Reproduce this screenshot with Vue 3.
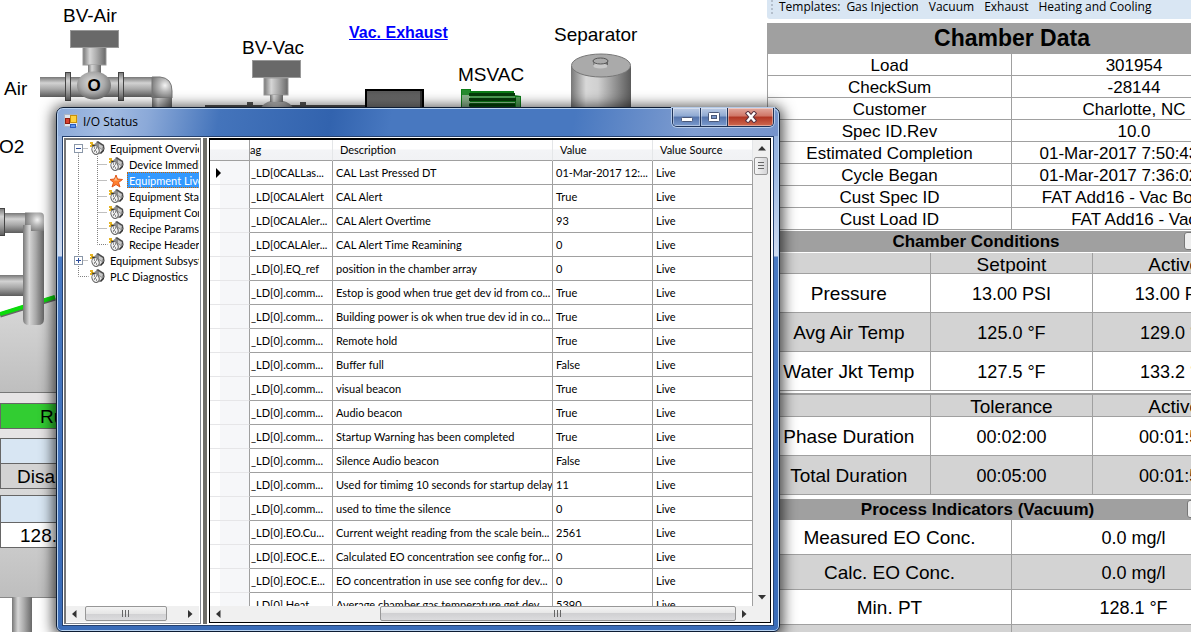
<template>
  <div class="hmi">
    <main class="diagram">
      <svg class="plant" width="767" height="632" viewBox="0 0 767 632">
        <defs>
          <linearGradient id="pipeH" x1="0" y1="0" x2="0" y2="1">
            <stop offset="0" stop-color="#777" />
            <stop offset="0.3" stop-color="#d2d2d2" />
            <stop offset="0.6" stop-color="#a8a8a8" />
            <stop offset="1" stop-color="#5c5c5c" />
          </linearGradient>
          <linearGradient id="pipeV" x1="0" y1="0" x2="1" y2="0">
            <stop offset="0" stop-color="#777" />
            <stop offset="0.3" stop-color="#d6d6d6" />
            <stop offset="0.6" stop-color="#aaa" />
            <stop offset="1" stop-color="#686868" />
          </linearGradient>
          <linearGradient id="tank" x1="0" y1="0" x2="1" y2="0">
            <stop offset="0" stop-color="#777" />
            <stop offset="0.25" stop-color="#d8d8d8" />
            <stop offset="0.45" stop-color="#d0d0d0" />
            <stop offset="1" stop-color="#5a5a5a" />
          </linearGradient>
          <linearGradient id="vessel" x1="0" y1="0" x2="0" y2="1">
            <stop offset="0" stop-color="#d9d9d9" />
            <stop offset="1" stop-color="#bebebe" />
          </linearGradient>
          <linearGradient id="box" x1="0" y1="0" x2="0" y2="1">
            <stop offset="0" stop-color="#555" />
            <stop offset="1" stop-color="#838383" />
          </linearGradient>
          <radialGradient id="ball" cx="0.45" cy="0.4" r="0.6">
            <stop offset="0" stop-color="#dcdcdc" />
            <stop offset="0.6" stop-color="#aaa" />
            <stop offset="1" stop-color="#707070" />
          </radialGradient>
          <radialGradient id="elbow" cx="0.65" cy="0.4" r="0.7">
            <stop offset="0" stop-color="#f4f4f4" />
            <stop offset="0.4" stop-color="#bbb" />
            <stop offset="1" stop-color="#777" />
          </radialGradient>
        </defs>

        <!-- air inlet valve -->
        <rect x="40" y="77" width="113" height="20" fill="url(#pipeH)" />
        <path d="M152 77h8q12 1 12 14v7h-20z" fill="url(#elbow)" stroke="#777" />
        <rect x="152" y="98" width="20" height="12" fill="url(#pipeV)" />
        <rect x="65.500" y="72.500" width="5" height="28" fill="url(#pipeH)" stroke="#444" />
        <rect x="118.500" y="72.500" width="5" height="28" fill="url(#pipeH)" stroke="#444" />
        <rect x="83" y="47" width="23" height="18" fill="url(#pipeV)" stroke="#999" />
        <rect x="88" y="65" width="13" height="10" fill="url(#pipeV)" />
        <ellipse cx="94" cy="85.500" rx="17" ry="14" fill="url(#ball)" />
        <rect x="70.500" y="30.500" width="48" height="17" fill="#696969" stroke="#999" />
        <text class="open" x="94" y="91" text-anchor="middle">O</text>

        <!-- vacuum valve -->
        <rect x="205" y="105" width="160" height="6" fill="#555" />
        <rect x="247" y="102" width="6" height="8" fill="#555" />
        <rect x="300" y="102" width="6" height="8" fill="#555" />
        <ellipse cx="277" cy="112" rx="17" ry="12" fill="url(#ball)" />
        <rect x="264" y="78" width="24" height="17" fill="url(#pipeV)" stroke="#999" />
        <rect x="270" y="95" width="13" height="7" fill="url(#pipeV)" />
        <rect x="252.500" y="60.500" width="48" height="17" fill="#696969" stroke="#999" />

        <rect x="366" y="90" width="57" height="20" fill="url(#box)" stroke="#000" stroke-width="2" />
        <path d="M421 90v18" stroke="#000" />

        <!-- vacuum pump motor -->
        <path d="M461 89h10v2h43v4l7 1v12h-60z" fill="#0d7d18" />
        <rect x="462" y="91" width="8" height="16" fill="#8ab38c" />
        <rect x="462" y="90" width="8" height="5" fill="#278c30" />
        <path d="M469 94.500h46M469 99.500h48M469 105h46" stroke="#053c0a" stroke-width="3" />
        <path d="M470 97h45M470 102.500h45" stroke="#8fc391" />
        <rect x="516" y="97" width="4" height="11" fill="#519c56" />

        <!-- separator -->
        <rect x="571" y="66" width="60" height="44" fill="url(#tank)" />
        <ellipse cx="601" cy="65.500" rx="29.500" ry="11.500" fill="#aaa" stroke="#777" />
        <rect x="593" y="61" width="15" height="6" fill="url(#tank)" />
        <ellipse cx="600.500" cy="66" rx="7.500" ry="2.500" fill="#c8c8c8" />
        <ellipse cx="600.500" cy="61" rx="7.500" ry="3" fill="#aaa" stroke="#555" />

        <!-- chamber body -->
        <path d="M0 316L44 299h60v94H0z" fill="url(#vessel)" />
        <path d="M0 315L26 307 55 298" fill="none" stroke="#666" stroke-width="5" />
        <path d="M0 314L26 306 55 297" fill="none" stroke="#0bdc0b" stroke-width="4" />
        <rect x="0" y="393" width="104" height="112" fill="#e6e4e5" />
        <path d="M0 392.500h104" stroke="#777" />
        <rect x="0" y="489" width="104" height="108" fill="url(#vessel)" />
        <path d="M0 597.500h104" stroke="#888" />
        <rect x="12" y="597" width="20" height="35" fill="url(#pipeV)" />

        <rect x="0" y="275" width="26" height="21" fill="url(#pipeH)" />
        <rect x="0" y="213" width="26" height="20" fill="url(#pipeH)" />
        <rect x="-4" y="208.500" width="8.500" height="27" fill="url(#pipeH)" stroke="#444" />
        <path d="M23 225h21v94q0 6-6 6h-9q-6 0-6-6z" fill="url(#pipeV)" />
        <path d="M25 212.500h15q4 0 4 4V231H31V225H25z" fill="url(#elbow)" />

        <g class="labels">
          <text x="63" y="22">BV-Air</text>
          <text x="242" y="54">BV-Vac</text>
          <text x="458" y="81">MSVAC</text>
          <text x="554" y="41">Separator</text>
          <text x="4" y="95">Air</text>
          <text x="-1" y="153">O2</text>
        </g>

        <!-- chamber status boxes -->
        <g stroke="#666">
          <rect x="0.500" y="403.500" width="110" height="25" fill="#32cd32" />
          <rect x="0.500" y="438.500" width="110" height="25" fill="#d8e6f3" />
          <rect x="0.500" y="463.500" width="110" height="25" fill="#d3d3d3" />
          <rect x="0.500" y="495.500" width="110" height="27" fill="#d8e6f3" />
          <rect x="0.500" y="522.500" width="110" height="25" fill="#fff" />
        </g>
        <g class="labels">
          <text x="40" y="423">Run</text>
          <text x="17" y="483">Disabled</text>
          <text x="20" y="542">128.1</text>
        </g>
      </svg>
      <a class="exhaust" href="#">Vac. Exhaust</a>
    </main>

    <aside class="panel">
      <nav class="templates">
        <span class="grip"></span>
        <span>Templates:</span>
        <button v-for="t in templates" :key="t" type="button">{{ t }}</button>
      </nav>

      <section class="block">
        <h1>Chamber Data</h1>
        <table class="data">
          <tbody>
            <tr v-for="row in chamberData" :key="row[0]">
              <th>{{ row[0] }}</th>
              <td>{{ row[1] }}</td>
            </tr>
          </tbody>
        </table>
      </section>

      <section class="block">
        <div class="bar">
          <h2>Chamber Conditions</h2>
          <button type="button" aria-label="Chamber Conditions options"></button>
        </div>
        <table v-for="group in conditions" :key="group.title" class="cond">
          <thead>
            <tr>
              <th></th>
              <th><span>{{ group.title }}</span></th>
              <th><span>Active</span></th>
            </tr>
          </thead>
          <tbody>
            <tr v-for="row in group.rows" :key="row[0]">
              <th>{{ row[0] }}</th>
              <td>{{ row[1] }}</td>
              <td>{{ row[2] }}</td>
            </tr>
          </tbody>
        </table>
      </section>

      <section class="block indicators">
        <div class="bar">
          <h2>Process Indicators (Vacuum)</h2>
          <button type="button" aria-label="Process Indicators options"></button>
        </div>
        <table class="cond two">
          <tbody>
            <tr v-for="(row, i) in indicators" :key="i">
              <th>{{ row[0] }}</th>
              <td>{{ row[1] }}</td>
            </tr>
          </tbody>
        </table>
      </section>
    </aside>

    <div class="window">
      <header class="titlebar">
        <svg width="14" height="14" viewBox="0 0 14 14">
          <rect x="0.500" y="0.500" width="13" height="12" fill="#dfe5ee" stroke="#aab4c4" />
          <rect x="6.500" y="1.500" width="6" height="7" fill="#ffd23c" stroke="#c8900a" />
          <rect x="1.500" y="4.500" width="4" height="5" fill="#d8402c" stroke="#8f1c10" />
          <rect x="6.500" y="10.500" width="5" height="3" fill="#5c94ec" stroke="#2c5cc0" />
        </svg>
        <span class="caption">I/O Status</span>
        <div class="controls">
          <button type="button" class="ctl min" aria-label="Minimize">
            <svg width="14" height="12" viewBox="0 0 14 12">
              <rect x="1.500" y="6.500" width="11" height="4" rx="1" fill="#fff" stroke="#4a5878" />
            </svg>
          </button>
          <button type="button" class="ctl max" aria-label="Maximize">
            <svg width="14" height="12" viewBox="0 0 14 12">
              <rect x="1.500" y="1.500" width="11" height="9" rx="1" fill="#fff" stroke="#4a5878" />
              <rect x="4.500" y="4.500" width="5" height="3" fill="#7c98c8" stroke="#4a5878" />
            </svg>
          </button>
          <button type="button" class="ctl close" aria-label="Close">
            <svg width="14" height="12" viewBox="0 0 14 12">
              <path d="M4 2.500L10 9.500M10 2.500L4 9.500" stroke="#5a3440" stroke-width="4.500" stroke-linecap="square" />
              <path d="M4 2.500L10 9.500M10 2.500L4 9.500" stroke="#fff" stroke-width="2.500" stroke-linecap="square" />
            </svg>
          </button>
        </div>
      </header>

      <div class="client">
        <div class="tree">
          <ul>
            <li v-for="node in tree" :key="node.label">
              <svg class="guide" width="23" height="16" viewBox="0 0 23 16">
                <path :d="node.rail" class="dots" />
                <g v-if="node.box">
                  <rect x="8.500" y="4.500" width="8" height="8" fill="#fff" stroke="#8a97a8" />
                  <path :d="node.box === '+' ? 'M10 8.500h5M12.500 6v5' : 'M10 8.500h5'" stroke="#2c4c9c" />
                </g>
              </svg>
              <svg v-if="node.child" class="guide" width="19" height="16" viewBox="0 0 19 16">
                <path :d="node.last ? 'M8.500 0v8.500h10' : 'M8.500 0v16M8.500 8.500h10'" class="dots" />
              </svg>
              <svg v-if="node.selected" width="16" height="16" viewBox="0 0 16 16">
                <path d="M8 3l1.500 4 5 .5-4 3 1.500 4.500L8 12.500 4 15l1.500-4.500L2 7.500l4.500-.5z" fill="#ff7f2e" stroke="#e0561a" />
                <path d="M8 5l1 3 3 .5H6z" fill="#ffc08a" />
              </svg>
              <svg v-else width="16" height="16" viewBox="0 0 16 16">
                <path d="M3 6l5-4 7 3 1 4-5 5-5 1-3-4z" fill="#8c8c8c" />
                <path d="M7 2l2-1 6 4v4l-4-5z" fill="#4c4c4c" />
                <path d="M10 4l4 2-1 3-3-2z" fill="#c8c8c8" />
                <path d="M10 8l3 2-2 3z" fill="#e4e4e4" />
                <ellipse cx="6.500" cy="10" rx="3.500" ry="4.500" transform="rotate(-20 6.500 10)" fill="#f0f0f0" stroke="#666" />
                <path d="M5 8h1M7 8h1M5 11h1M7 12h1M6 10h1" stroke="#333" />
                <path d="M11 13l4-4v2l-3 3z" fill="#333" />
                <path d="M1 3h2v2h2M1 6h2" fill="none" stroke="#e6b422" stroke-width="2" />
                <path d="M3 5l3 1" stroke="#333" />
              </svg>
              <button type="button" :class="{ selected: node.selected }">{{ node.label }}</button>
            </li>
          </ul>
          <div class="hscroll">
            <button type="button" aria-label="Scroll left"><svg width="5" height="8"><path d="M4.500 0v8L0 4z" fill="#333" /></svg></button>
            <div class="track"><div class="thumb tree-thumb"><i></i></div></div>
            <button type="button" aria-label="Scroll right"><svg width="5" height="8"><path d="M0 0v8l4.500-4z" fill="#333" /></svg></button>
          </div>
        </div>

        <div class="splitter"></div>

        <div class="grid">
          <div class="grid-view">
            <table>
              <colgroup>
                <col class="c-mark" /><col class="c-tag" /><col /><col class="c-val" /><col class="c-val" />
              </colgroup>
              <thead>
                <tr>
                  <th></th>
                  <th class="cut">ag</th>
                  <th>Description</th>
                  <th>Value</th>
                  <th>Value Source</th>
                </tr>
              </thead>
              <tbody>
                <tr v-for="(row, i) in rows" :key="i">
                  <th>
                    <svg v-if="i === 0" width="6" height="10"><path d="M0 0l5 5-5 5z" fill="#000" /></svg>
                  </th>
                  <td>{{ row[0] }}</td>
                  <td>{{ row[1] }}</td>
                  <td>{{ row[2] }}</td>
                  <td>Live</td>
                </tr>
              </tbody>
            </table>
            <div class="vscroll">
              <button type="button" aria-label="Scroll up"><svg width="8" height="5"><path d="M0 4.500h8L4 0z" fill="#333" /></svg></button>
              <div class="vthumb"><i></i></div>
              <button type="button" class="down" aria-label="Scroll down"><svg width="8" height="5"><path d="M0 0h8L4 4.500z" fill="#333" /></svg></button>
            </div>
          </div>
          <div class="hscroll wide">
            <button type="button" aria-label="Scroll left"><svg width="5" height="8"><path d="M4.500 0v8L0 4z" fill="#333" /></svg></button>
            <div class="track"><div class="thumb grid-thumb"><i></i></div></div>
            <button type="button" aria-label="Scroll right"><svg width="5" height="8"><path d="M0 0v8l4.500-4z" fill="#333" /></svg></button>
          </div>
        </div>
      </div>
    </div>
  </div>
</template>

<script setup>
const templates = ['Gas Injection', 'Vacuum', 'Exhaust', 'Heating and Cooling']

const chamberData = [
  ['Load', '301954'],
  ['CheckSum', '-28144'],
  ['Customer', 'Charlotte, NC'],
  ['Spec ID.Rev', '10.0'],
  ['Estimated Completion', '01-Mar-2017 7:50:43 PM'],
  ['Cycle Began', '01-Mar-2017 7:36:02 PM'],
  ['Cust Spec ID', 'FAT Add16 - Vac Bottom'],
  ['Cust Load ID', 'FAT Add16 - Vac'],
]

const conditions = [
  {
    title: 'Setpoint',
    rows: [
      ['Pressure', '13.00 PSI', '13.00 PSI'],
      ['Avg Air Temp', '125.0 °F', '129.0 °F'],
      ['Water Jkt Temp', '127.5 °F', '133.2 °F'],
    ],
  },
  {
    title: 'Tolerance',
    rows: [
      ['Phase Duration', '00:02:00', '00:01:55'],
      ['Total Duration', '00:05:00', '00:01:55'],
    ],
  },
]

const indicators = [
  ['Measured EO Conc.', '0.0 mg/l'],
  ['Calc. EO Conc.', '0.0 mg/l'],
  ['Min. PT', '128.1 °F'],
  ['', ''],
]

const through = 'M12.500 0v16'
const tree = [
  { label: 'Equipment Overview', box: '-', rail: 'M12.500 8.500v8M12.500 8.500h10' },
  { label: 'Device Immediate', child: true, rail: through },
  { label: 'Equipment Live', child: true, rail: through, selected: true },
  { label: 'Equipment Status', child: true, rail: through },
  { label: 'Equipment Config', child: true, rail: through },
  { label: 'Recipe Params', child: true, rail: through },
  { label: 'Recipe Header', child: true, rail: through, last: true },
  { label: 'Equipment Subsystems', box: '+', rail: 'M12.500 0v16M12.500 8.500h10' },
  { label: 'PLC Diagnostics', rail: 'M12.500 0v8.500h10' },
]

const rows = [
  ['_LD[0CALLas...', 'CAL Last Pressed DT', '01-Mar-2017 12:...'],
  ['_LD[0CALAlert', 'CAL Alert', 'True'],
  ['_LD[0CALAler...', 'CAL Alert Overtime', '93'],
  ['_LD[0CALAler...', 'CAL Alert Time Reamining', '0'],
  ['_LD[0].EQ_ref', 'position in the chamber array', '0'],
  ['_LD[0].comm...', 'Estop is good when true get dev id from co...', 'True'],
  ['_LD[0].comm...', 'Building power is ok when true dev id in co...', 'True'],
  ['_LD[0].comm...', 'Remote hold', 'True'],
  ['_LD[0].comm...', 'Buffer full', 'False'],
  ['_LD[0].comm...', 'visual beacon', 'True'],
  ['_LD[0].comm...', 'Audio beacon', 'True'],
  ['_LD[0].comm...', 'Startup Warning has been completed', 'True'],
  ['_LD[0].comm...', 'Silence Audio beacon', 'False'],
  ['_LD[0].comm...', 'Used for timimg 10 seconds for startup delay', '11'],
  ['_LD[0].comm...', 'used to time the silence', '0'],
  ['_LD[0].EO.Cu...', 'Current weight reading from the scale bein...', '2561'],
  ['_LD[0].EOC.E...', 'Calculated EO concentration see config for...', '0'],
  ['_LD[0].EOC.E...', 'EO concentration in use see config for dev...', '0'],
  ['_LD[0].Heat...', 'Average chamber gas temperature get dev...', '5390'],
]
</script>

<style>
body {
  margin: 0;
}
</style>

<style scoped>
.hmi {
  position: relative;
  display: flex;
  height: 100vh;
  overflow: hidden;
  background: #fff;
  color: #000;
  font-family: "Liberation Sans", Arial, sans-serif;
}

button {
  font: inherit;
  color: inherit;
  padding: 0;
  border: 0;
  background: none;
}

svg {
  display: block;
  flex: none;
}

.diagram {
  position: relative;
  flex: 1;
  min-width: 0;
  overflow: hidden;
}

.labels text {
  font-size: 19px;
}

.open {
  font-size: 17px;
  font-weight: bold;
}

.exhaust {
  position: absolute;
  left: 349px;
  top: 24px;
  font-size: 16px;
  line-height: 18px;
  font-weight: bold;
  color: #00f;
}

/* right-hand data panel */
.panel {
  flex: 0 0 424px;
  overflow: hidden;
}

.templates {
  display: flex;
  height: 19px;
  margin-bottom: 4px;
  padding-left: 4px;
  border-radius: 0 0 0 3px;
  background: #d9e6f3;
  font-family: "Open Sans", "Noto Sans", sans-serif;
  font-size: 12px;
  line-height: 14px;
  white-space: nowrap;
}

.templates span + button {
  margin-left: 6px;
}

.templates button {
  height: 14px;
  margin-right: 10px;
}

.grip {
  width: 2px;
  height: 14px;
  margin-right: 6px;
  background: repeating-linear-gradient(#b4bfcc 0 2px, transparent 2px 4px);
}

.block {
  width: 489px;
  border-left: 1px solid #a0a0a0;
  box-sizing: border-box;
}

h1,
h2 {
  margin: 0;
  text-align: center;
  background: #a0a0a0;
}

h1 {
  font-size: 23px;
  line-height: 31px;
}

.bar {
  display: flex;
  height: 21px;
  padding: 0 50px 0 0;
  background: #a0a0a0;
  margin-top: 1px;
  margin-bottom: 1px;
}

.bar h2 {
  flex: 1;
  font-size: 17px;
  line-height: 21px;
}

.bar button {
  width: 22px;
  height: 18px;
  margin-top: 1px;
  border: 1px solid #777;
  border-radius: 3px;
  background: #eee;
}

table {
  width: 100%;
  border-collapse: separate;
  border-spacing: 0;
  table-layout: fixed;
}

th,
td {
  padding: 0;
  font-weight: normal;
  text-align: center;
  white-space: nowrap;
  overflow: hidden;
}

.data th,
.data td {
  padding-top: 2px;
  font-size: 17px;
  line-height: 19px;
  border-bottom: 1px solid #a0a0a0;
}

.data th,
.cond th,
.cond td {
  border-right: 1px solid #a0a0a0;
}

.cond th,
.cond td {
  padding-top: 2px;
  font-size: 18px;
  line-height: 36px;
  border-bottom: 1px solid #a0a0a0;
}

.cond th {
  font-size: 19px;
}

.cond thead th {
  padding-top: 0;
  line-height: 24px;
  background: #d3d3d3;
}

.cond thead span {
  display: block;
  height: 20px;
  overflow: hidden;
}

.cond tbody tr:nth-child(even) > * {
  background: #d3d3d3;
}

.cond + .cond {
  margin-top: 2px;
  border-top: 2px solid #a0a0a0;
}

.cond + .cond thead span {
  height: 21px;
}

.indicators {
  padding-top: 3px;
}

.indicators .bar {
  margin-bottom: 0;
  padding-right: 47px;
}

.two th,
.two td {
  line-height: 32px;
}

.two tr:last-child > * {
  height: 34px;
}

/* floating window */
.window {
  position: absolute;
  left: 56px;
  right: 411px;
  top: 107px;
  bottom: 0;
  display: flex;
  flex-direction: column;
  box-sizing: border-box;
  padding: 0 5px 5px;
  border: 1px solid #0d1c33;
  border-radius: 7px 7px 6px 6px;
  background: linear-gradient(#8fabda 0, #9db9e2 60px, #d0dcf0 148px, #4a7ac2 149px, #3a6cb8 100%);
  box-shadow: inset 0 0 0 1px #b8d2f0, 0 2px 14px 3px rgba(0, 0, 0, 0.7);
  font-family: Lato, "Liberation Sans", sans-serif;
  font-size: 11px;
}

.titlebar {
  display: flex;
  align-items: flex-start;
  height: 27px;
  margin: 1px -4px 0;
  padding-left: 6px;
  border-radius: 6px 6px 0 0;
  background: linear-gradient(100deg, #8ba9d8 0, #a3bce2 50px, #8ba9d8 90px, #4474bb 160px, #3263ae 270px, #4878c0 330px, #4878c0 510px, #7f9dd0 630px, #7593cb 100%);
}

.titlebar > svg {
  margin-top: 5px;
}

.caption {
  flex: 1;
  margin-left: 5px;
  font-family: "Open Sans", "Noto Sans", sans-serif;
  font-size: 12px;
  line-height: 25px;
}

.controls {
  display: flex;
  margin: -1px 4px 0 0;
  border: 1px solid #1f3358;
  border-top: 0;
  border-radius: 0 0 5px 5px;
  overflow: hidden;
  box-shadow: 0 0 0 1px #b4cae8;
}

.ctl {
  display: flex;
  align-items: center;
  justify-content: center;
  width: 27px;
  height: 18px;
  background: linear-gradient(#bccbe4, #8ea9d2 45%, #5474ac 50%, #7b9bce);
  box-shadow: inset 0 0 0 1px rgba(255, 255, 255, 0.4);
}

.ctl + .ctl {
  border-left: 1px solid #1f3358;
}

.ctl.close {
  width: 46px;
  background: linear-gradient(#e2a99e, #cf7566 45%, #b03523 50%, #cf6a50);
}

.client {
  flex: 1;
  min-height: 0;
  display: flex;
  box-sizing: border-box;
  padding: 1px;
  border: 1px solid #24406e;
  background: #fff;
}

.tree {
  display: flex;
  flex-direction: column;
  flex: 0 0 137px;
  box-sizing: border-box;
  min-width: 0;
  border: 1px solid #828790;
  border-top: 2px solid #777;
  border-left: 2px solid #777;
  padding: 0 1px 1px 0;
  background: #fff;
}

.tree ul {
  flex: 1;
  margin: 0;
  padding: 0;
  list-style: none;
  overflow: hidden;
}

.tree li {
  display: flex;
  height: 16px;
}

.tree li button {
  flex: none;
  margin-left: 3px;
  padding: 0 2px;
  height: 16px;
  line-height: 15px;
  white-space: nowrap;
}

.tree li .selected {
  background: #3399ff;
  color: #fff;
  outline: 1px dotted #c60;
  outline-offset: -1px;
}

.dots {
  fill: none;
  stroke: #808080;
  stroke-dasharray: 1 1;
}

.splitter {
  flex: 0 0 4px;
  margin: 0 2px;
  background: #6d6d69;
}

.grid {
  display: flex;
  flex: 1;
  flex-direction: column;
  min-width: 0;
  margin-bottom: 1px;
  margin-right: 1px;
  border: 1px solid #000;
  border-top-width: 2px;
}

.grid-view {
  display: flex;
  flex: 1;
  min-height: 0;
  overflow: hidden;
  align-items: flex-start;
}

.grid-view table {
  flex: 1;
  min-width: 0;
}

.c-mark {
  width: 40px;
}

.c-tag {
  width: 83px;
}

.c-val {
  width: 100px;
}

.grid-view th,
.grid-view td {
  box-sizing: border-box;
  height: 24px;
  padding-left: 3px;
  text-align: left;
  line-height: 22px;
  border-right: 1px solid #a0a0a0;
  border-bottom: 1px solid #a0a0a0;
}

.grid-view td:nth-child(2) {
  padding-left: 1px;
}

.grid-view thead th {
  height: 21px;
  line-height: 20px;
  padding-left: 7px;
  border-right-color: #e4e6e8;
  background: linear-gradient(#fff, #fff 45%, #f3f4f6 50%, #f1f2f4);
}

.grid-view th:first-child {
  border-right-color: #a0a0a0;
}

.grid-view thead .cut {
  padding-left: 0;
}

.grid-view tbody th {
  padding-left: 6px;
  border-bottom-color: #e6e6e8;
  background: linear-gradient(90deg, #fff 10px, #f6f7f9 10px);
}

.vscroll {
  display: flex;
  flex: 0 0 17px;
  flex-direction: column;
  align-self: stretch;
  background: #f0f0f0;
}

.vscroll button {
  display: flex;
  align-items: center;
  justify-content: center;
  height: 17px;
}

.vscroll .down {
  margin-top: auto;
}

.vthumb {
  box-sizing: border-box;
  height: 18px;
  margin: 0 2px 0 1px;
  padding: 4px 3px;
  border: 1px solid #979797;
  border-radius: 2px;
  background: linear-gradient(90deg, #f6f6f6, #d4d4d6);
}

.vthumb i {
  display: block;
  height: 8px;
  background: repeating-linear-gradient(#666 0 1px, transparent 1px 3px);
}

.hscroll {
  display: flex;
  height: 16px;
  background: #f0f0f0;
}

.wide {
  padding-right: 17px;
}

.hscroll button {
  display: flex;
  flex: 0 0 17px;
  align-items: center;
  justify-content: center;
}

.track {
  flex: 1;
}

.thumb {
  box-sizing: border-box;
  display: flex;
  align-items: center;
  justify-content: center;
  height: 15px;
  border: 1px solid #979797;
  border-radius: 2px;
  background: linear-gradient(#f4f4f4, #e6e6e6 50%, #d0d0d2 50%, #dcdcde);
}

.thumb i {
  width: 8px;
  height: 7px;
  background: repeating-linear-gradient(90deg, #666 0 1px, transparent 1px 3px);
}

.tree-thumb {
  width: 82px;
  margin-left: 2px;
}

.grid-thumb {
  width: 70%;
  margin-left: auto;
}
</style>
